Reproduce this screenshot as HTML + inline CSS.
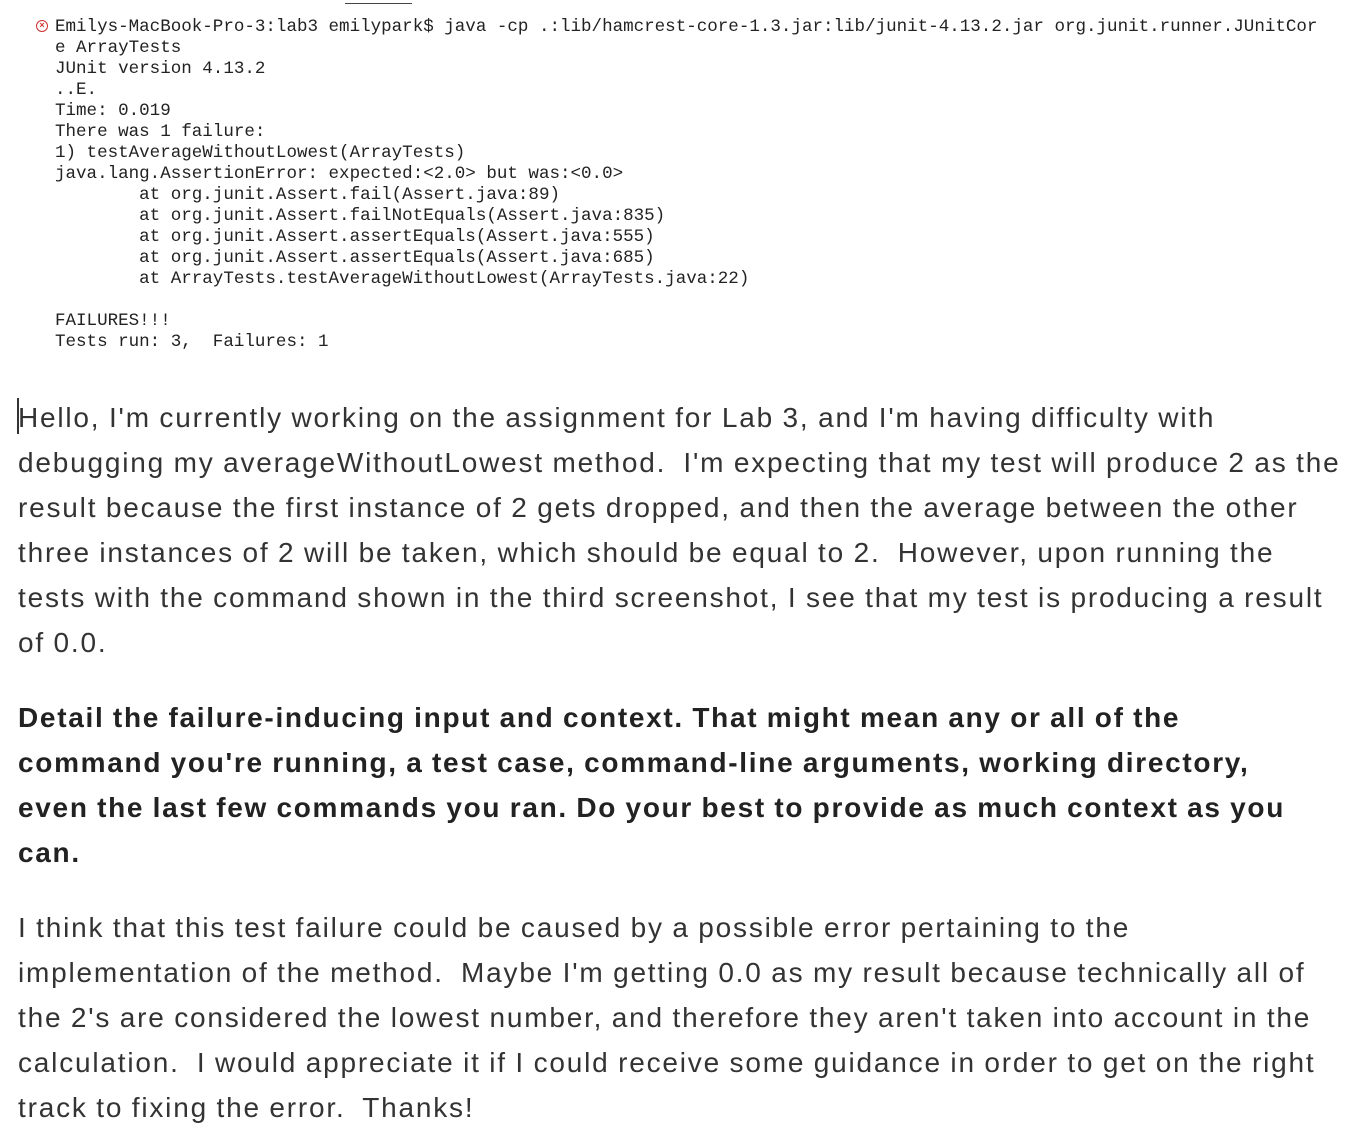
<!DOCTYPE html>
<html><head><meta charset="utf-8"><style>
body{margin:0;background:#fff;width:1350px;height:1146px;position:relative;overflow:hidden}
.term{position:absolute;left:55px;top:17px;font-family:"Liberation Mono",monospace;font-size:17.55px;line-height:21px;color:#222;white-space:pre;margin:0}
.p{position:absolute;left:18px;font-family:"Liberation Sans",sans-serif;font-size:28px;line-height:45px;color:#333;white-space:pre;letter-spacing:1.8px;word-spacing:-1px}
.b{font-weight:bold;color:#222;letter-spacing:1.7px;word-spacing:-1px}
.bar{position:absolute;left:345px;top:3px;width:67px;height:1px;background:#444}
.ic{position:absolute;left:36px;top:20px;width:12px;height:12px;border:1.5px solid #d03030;border-radius:50%;box-sizing:border-box;color:#d03030;font:bold 9px/9px "Liberation Sans",sans-serif;text-align:center}
.cur{position:absolute;left:17px;top:398px;width:1.5px;height:36px;background:#333}
</style></head><body>
<div class="bar"></div>
<div class="ic">×</div>
<pre class="term">Emilys-MacBook-Pro-3:lab3 emilypark$ java -cp .:lib/hamcrest-core-1.3.jar:lib/junit-4.13.2.jar org.junit.runner.JUnitCor
e ArrayTests
JUnit version 4.13.2
..E.
Time: 0.019
There was 1 failure:
1) testAverageWithoutLowest(ArrayTests)
java.lang.AssertionError: expected:&lt;2.0&gt; but was:&lt;0.0&gt;
        at org.junit.Assert.fail(Assert.java:89)
        at org.junit.Assert.failNotEquals(Assert.java:835)
        at org.junit.Assert.assertEquals(Assert.java:555)
        at org.junit.Assert.assertEquals(Assert.java:685)
        at ArrayTests.testAverageWithoutLowest(ArrayTests.java:22)

FAILURES!!!
Tests run: 3,  Failures: 1</pre>
<div class="cur"></div>
<div class="p" style="top:395px">Hello, I'm currently working on the assignment for Lab 3, and I'm having difficulty with
debugging my averageWithoutLowest method.  I'm expecting that my test will produce 2 as the
result because the first instance of 2 gets dropped, and then the average between the other
three instances of 2 will be taken, which should be equal to 2.  However, upon running the
tests with the command shown in the third screenshot, I see that my test is producing a result
of 0.0.</div>
<div class="p b" style="top:695px">Detail the failure-inducing input and context. That might mean any or all of the
command you're running, a test case, command-line arguments, working directory,
even the last few commands you ran. Do your best to provide as much context as you
can.</div>
<div class="p" style="top:905px">I think that this test failure could be caused by a possible error pertaining to the
implementation of the method.  Maybe I'm getting 0.0 as my result because technically all of
the 2's are considered the lowest number, and therefore they aren't taken into account in the
calculation.  I would appreciate it if I could receive some guidance in order to get on the right
track to fixing the error.  Thanks!</div>
</body></html>
